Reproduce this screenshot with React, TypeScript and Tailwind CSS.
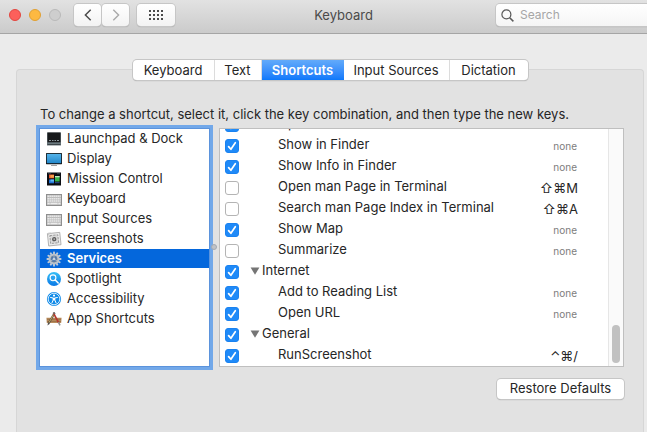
import React, { useState } from "react";

type IconProps = { children: React.ReactNode };

function Icon({ children }: IconProps) {
  return (
    <svg viewBox="0 0 16 16" className="size-4 shrink-0" aria-hidden="true">
      {children}
    </svg>
  );
}

const dockIcon = (
  <Icon>
    <rect x="1" y="1.5" width="14" height="13" fill="#6f7b80" />
    <rect x="1.5" y="1.5" width="13" height="9.5" fill="#17191b" />
    <rect x="1.5" y="11" width="13" height="3" fill="#3c4549" />
    <path d="M3 9.5h2M6 9.5h1.5M8.5 9.5h1.5M11 9.5h2" stroke="#8b979c" strokeWidth="1" />
    <path d="M1.5 12.2h13" stroke="#93a4aa" strokeWidth="0.8" />
  </Icon>
);

const displayIcon = (
  <Icon>
    <defs>
      <linearGradient id="screen" x1="0" y1="0" x2="0" y2="1">
        <stop offset="0" stopColor="#55b4ea" />
        <stop offset="1" stopColor="#2388cb" />
      </linearGradient>
    </defs>
    <rect x="0" y="2" width="16" height="11.2" rx="0.6" fill="#111" />
    <rect x="0.8" y="2.8" width="14.4" height="9.4" fill="url(#screen)" />
    <path d="M6 13.2h4v1H6z" fill="#b9bcbe" />
    <path d="M5 14h6v0.8H5z" fill="#8c8f91" />
  </Icon>
);

const missionIcon = (
  <Icon>
    <rect x="1" y="1.5" width="14" height="13" fill="#0b0d12" />
    <rect x="3" y="3.5" width="5" height="3.8" fill="#e8572a" />
    <rect x="4.4" y="4" width="3.6" height="2.6" fill="#f6a04a" />
    <rect x="9" y="5" width="4.6" height="5.5" fill="#35b54a" />
    <rect x="9" y="5" width="4.6" height="1.3" fill="#c6e8c4" />
    <rect x="3" y="8.5" width="5" height="3.8" fill="#2275d8" />
    <rect x="4.5" y="8.5" width="3.5" height="2" fill="#65b9f1" />
    <rect x="9" y="11" width="4.6" height="1.2" fill="#29427c" />
    <path d="M2 2.7h3M11 2.7h3" stroke="#506070" strokeWidth="0.6" />
  </Icon>
);

const keyboardIcon = (
  <Icon>
    <rect x="0.5" y="3.5" width="15" height="11" fill="#bdbdbd" stroke="#8f8f8f" strokeWidth="1" />
    <path d="M1.5 5.3h13M1.5 7.7h13M1.5 10.1h13" stroke="#ededed" strokeWidth="1.5" strokeDasharray="1.4 0.6" />
    <path d="M1.5 12.5h2.2M4.4 12.5h7.2M12.3 12.5h2.2" stroke="#ededed" strokeWidth="1.3" />
  </Icon>
);

const screenshotIcon = (
  <Icon>
    <g transform="rotate(-6 8 8)">
      <rect x="2" y="2" width="12.4" height="12.4" fill="#ececec" stroke="#a5a5a5" strokeWidth="0.8" />
      <rect x="4.2" y="4.2" width="8" height="8" fill="#dadada" stroke="#8d8d8d" strokeWidth="0.8" strokeDasharray="2.4 1" />
      <circle cx="8.2" cy="8.2" r="2.2" fill="#5c5c5c" />
      <circle cx="8.2" cy="8.2" r="0.9" fill="#b4b4b4" />
    </g>
    <path d="M2 1.8 5 1.4 2.2 4.4z" fill="#c8c8c8" />
  </Icon>
);

const servicesIcon = (
  <Icon>
    {[0, 30, 60, 90, 120, 150].map((angle) => (
      <rect key={angle} x="7.1" y="0.6" width="1.8" height="14.8" rx="0.5" fill="#c3ccd6" transform={`rotate(${angle} 8 8)`} />
    ))}
    <circle cx="8" cy="8" r="4.4" fill="#4b76ac" stroke="#b9c2cb" strokeWidth="2.4" />
    <circle cx="8" cy="8" r="3.1" fill="none" stroke="#7c8894" strokeWidth="0.6" />
    <path d="M8 8V4.6M8 8l3 1.8M8 8l-3 1.8" stroke="#aab7c4" strokeWidth="0.9" />
    <circle cx="8" cy="8" r="1.3" fill="#c9d3dc" />
  </Icon>
);

const spotlightIcon = (
  <Icon>
    <defs>
      <linearGradient id="lens" x1="0" y1="0" x2="0" y2="1">
        <stop offset="0" stopColor="#36c0f7" />
        <stop offset="1" stopColor="#0a78e6" />
      </linearGradient>
    </defs>
    <circle cx="8" cy="8" r="7" fill="url(#lens)" />
    <circle cx="7" cy="6.8" r="2.9" fill="#2ba4f0" stroke="#fff" strokeWidth="1.1" />
    <path d="m9.2 9 3 3" stroke="#fff" strokeWidth="1.5" strokeLinecap="round" />
  </Icon>
);

const accessibilityIcon = (
  <Icon>
    <circle cx="8" cy="8" r="7.1" fill="#128be8" />
    <circle cx="8" cy="8" r="5.8" fill="none" stroke="#fff" strokeWidth="0.8" />
    <circle cx="8" cy="4.6" r="1.1" fill="#fff" />
    <path d="M4.6 6.5 7.2 7v2l-1.3 3M11.4 6.5 8.8 7v2l1.3 3" fill="none" stroke="#fff" strokeWidth="1" strokeLinecap="round" />
    <path d="M7 6.7h2v2.6H7z" fill="#fff" />
  </Icon>
);

const appShortcutsIcon = (
  <Icon>
    <path d="M0.4 6.8h15.2l-.4 5.2H.8z" fill="#b98d5e" />
    <path d="M1 8.3h14M1 10.4h14" stroke="#8a5f38" strokeWidth="0.6" />
    <path d="M8.6 2 2.4 12.8" stroke="#4e4a46" strokeWidth="2" />
    <path d="M8.2 2.4 3 11.6" stroke="#d9b65a" strokeWidth="0.9" />
    <path d="m2.4 12.2-1.2 2.4 2.2-1.5z" fill="#33302e" />
    <path d="m7.4 2 5.4 10" stroke="#b5372c" strokeWidth="1.6" />
    <path d="m12.4 11 1 2.2M13.2 12.6l.8 1.8" stroke="#8e9296" strokeWidth="1.5" />
    <path d="M6.8 1.6 8.6 1l.8 1.6-1.8.9z" fill="#6f6a68" />
  </Icon>
);

const categories = [
  { name: "Launchpad & Dock", icon: dockIcon },
  { name: "Display", icon: displayIcon },
  { name: "Mission Control", icon: missionIcon },
  { name: "Keyboard", icon: keyboardIcon },
  { name: "Input Sources", icon: keyboardIcon },
  { name: "Screenshots", icon: screenshotIcon },
  { name: "Services", icon: servicesIcon },
  { name: "Spotlight", icon: spotlightIcon },
  { name: "Accessibility", icon: accessibilityIcon },
  { name: "App Shortcuts", icon: appShortcutsIcon },
];

type Service = { name: string; on: boolean; keys?: string; group?: boolean };

const services: Service[] = [
  { name: "Open", on: true },
  { name: "Show in Finder", on: true, keys: "none" },
  { name: "Show Info in Finder", on: true, keys: "none" },
  { name: "Open man Page in Terminal", on: false, keys: "⇧⌘M" },
  { name: "Search man Page Index in Terminal", on: false, keys: "⇧⌘A" },
  { name: "Show Map", on: true, keys: "none" },
  { name: "Summarize", on: false, keys: "none" },
  { name: "Internet", on: true, group: true },
  { name: "Add to Reading List", on: true, keys: "none" },
  { name: "Open URL", on: true, keys: "none" },
  { name: "General", on: true, group: true },
  { name: "RunScreenshot", on: true, keys: "⌃⌘/" },
];

const tabs = [
  { name: "Keyboard", width: "w-[82px]" },
  { name: "Text", width: "w-[47px]" },
  { name: "Shortcuts", width: "w-[82px]" },
  { name: "Input Sources", width: "w-[106px]" },
  { name: "Dictation", width: "w-[78px]" },
];

function TitleBar() {
  const button =
    "flex h-[22px] items-center justify-center bg-linear-to-b from-white to-[#f3f3f3] shadow-[0_0_0_1px_#c6c6c6,0_1px_1px_#9a9a9a]";
  return (
    <header className="-mr-10 grid h-[34px] grid-cols-[minmax(0,1fr)_170px_minmax(0,1fr)] border-b border-[#a5a5a5] bg-linear-to-b from-[#e2e2e2] to-[#cbcbcb] pt-1">
      <div className="flex h-[22px] items-center pl-[9px]">
        <div className="flex gap-2">
          <button aria-label="Close" className="size-3 rounded-full border border-[#e2463f] bg-[#fc605b]" />
          <button aria-label="Minimize" className="size-3 rounded-full border border-[#e0a033] bg-[#fdb942]" />
          <button aria-label="Zoom" className="size-3 rounded-full border border-[#b9b9b9] bg-[#cecece]" />
        </div>
        <div className="ml-[13px] flex gap-px">
          <button aria-label="Back" className={`${button} w-[27px] rounded-[4px]`}>
            <svg viewBox="0 0 8 12" className="h-3 w-2">
              <path d="M6.7.8 1.4 6l5.3 5.2" fill="none" stroke="#4b4b4b" strokeWidth="1.5" />
            </svg>
          </button>
          <button aria-label="Forward" className={`${button} w-[27px] rounded-[4px]`}>
            <svg viewBox="0 0 8 12" className="h-3 w-2">
              <path d="M1.3.8 6.6 6l-5.3 5.2" fill="none" stroke="#a9a9a9" strokeWidth="1.4" />
            </svg>
          </button>
        </div>
        <button aria-label="Show All" className={`${button} ml-2 w-[38px] rounded-[4px]`}>
          <svg viewBox="0 0 14 10" className="h-2.5 w-3.5" fill="#4b4b4b">
            {[0, 4, 8].map((y) =>
              [0, 4, 8, 12].map((x) => <rect key={`${x}-${y}`} x={x} y={y} width="2" height="2" />),
            )}
          </svg>
        </button>
      </div>
      <h1 className="text-center leading-[23px] text-[#4a4a4a]">Keyboard</h1>
      <div className="flex justify-end">
        <label className="flex h-[22px] w-[191px] items-center gap-1.5 rounded-[4px] bg-linear-to-b from-white to-[#f5f5f5] pl-[5px] shadow-[0_0_0_1px_#c6c6c6,0_1px_1px_#9a9a9a]">
          <svg viewBox="0 0 13 13" className="size-[13px] shrink-0" fill="none" stroke="#5a5a5a" strokeWidth="1.2">
            <circle cx="5.4" cy="5.4" r="4.5" />
            <path d="m8.7 8.7 3.7 3.7" strokeWidth="1.5" />
          </svg>
          <input
            type="search"
            aria-label="Search"
            placeholder="Search"
            className="w-full min-w-0 bg-transparent text-xs outline-none placeholder:text-[#a6a6a6]"
          />
        </label>
      </div>
    </header>
  );
}

function TabBar() {
  const [active, setActive] = useState("Shortcuts");
  return (
    <div
      role="tablist"
      className="-mt-[10px] mr-1 flex h-5 divide-x divide-[#dcdcdc] self-center overflow-hidden rounded-[4px] bg-white shadow-[0_0_0_1px_#c6c6c6,0_1px_1px_#999]"
    >
      {tabs.map((tab) => (
        <button
          key={tab.name}
          role="tab"
          aria-selected={tab.name === active}
          onClick={() => setActive(tab.name)}
          className={`${tab.width} whitespace-nowrap text-center leading-5 aria-selected:border-r-0 aria-selected:bg-linear-to-b aria-selected:from-[#62aafa] aria-selected:to-[#0a78fb] aria-selected:font-semibold aria-selected:text-white`}
        >
          {tab.name}
        </button>
      ))}
    </div>
  );
}

function CategoryList() {
  const [selected, setSelected] = useState("Services");
  return (
    <ul className="my-px w-[169px] shrink-0 bg-white shadow-[0_0_0_1px_#5b93dc,0_0_0_4px_#72a8e9]">
      {categories.map((category) => (
        <li key={category.name}>
          <button
            aria-pressed={category.name === selected}
            onClick={() => setSelected(category.name)}
            className="flex h-5 w-full items-center gap-[5px] border-b border-white pl-[6px] aria-pressed:bg-[#0467dc] aria-pressed:font-semibold aria-pressed:text-white"
          >
            {category.icon}
            <span className="pb-0.5 leading-4">{category.name}</span>
          </button>
        </li>
      ))}
    </ul>
  );
}

function ServiceRow({ service }: { service: Service }) {
  const [on, setOn] = useState(service.on);
  const id = service.name.toLowerCase().replaceAll(" ", "-");
  return (
    <tr className="h-[21px]">
      <td className="w-[30px] p-0 pl-[5px]">
        <span className="grid size-3.5">
          <input
            id={id}
            type="checkbox"
            checked={on}
            onChange={() => setOn(!on)}
            className="peer col-start-1 row-start-1 size-3.5 appearance-none rounded-[3px] border border-[#b4b4b4] bg-white checked:border-[#1a82f0] checked:bg-[#1f8af8]"
          />
          <svg
            viewBox="0 0 14 14"
            className="pointer-events-none invisible col-start-1 row-start-1 size-3.5 peer-checked:visible"
          >
            <path d="m3.6 7.6 2.3 2.7 4.4-6.6" fill="none" stroke="#fff" strokeWidth="1.7" strokeLinecap="round" strokeLinejoin="round" />
          </svg>
        </span>
      </td>
      <td className={service.group ? "p-0" : "p-0 pl-7"}>
        <label htmlFor={id} className="flex h-[21px] items-center whitespace-nowrap pb-px">
          {service.group && (
            <svg viewBox="0 0 10 8" className="mr-0.5 h-2 w-2.5" fill="#757575">
              <path d="M.6.4h8.8L5 7.8z" />
            </svg>
          )}
          {service.name}
        </label>
      </td>
      <td
        className={
          service.keys === "none"
            ? "p-0 pr-[31px] text-right text-[10px] leading-4 text-[#7d7d7d]"
            : "p-0 pr-[30px] text-right leading-4"
        }
      >
        {service.keys}
      </td>
    </tr>
  );
}

export default function App() {
  return (
    <div className="flex min-h-screen flex-col overflow-hidden bg-[#ebebeb] font-['Inter','Liberation_Sans',sans-serif] text-[13px] text-[#262626]">
      <TitleBar />
      <main className="mt-[35px] mr-[3px] ml-4 flex grow flex-col rounded-t-[4px] border border-b-0 border-[#d6d6d6] bg-[#e2e2e2] pr-[19px] pl-[23px]">
        <TabBar />
        <p className="mt-6 whitespace-nowrap leading-5">
          To change a shortcut, select it, click the key combination, and then type the new keys.
        </p>
        <div className="mt-1 flex h-[239px] items-stretch">
          <CategoryList />
          <div className="relative w-2.5 shrink-0">
            <span className="absolute top-[116px] left-0.5 size-1.5 rounded-full border border-[#a3a9b3] bg-[#bfc2c7]" />
          </div>
          <div className="flex min-w-0 grow border border-[#bfbfbf] bg-white">
            <div className="flex min-w-0 grow flex-col justify-end overflow-hidden">
              <table className="w-full border-collapse">
                <tbody>
                  {services.map((service) => (
                    <ServiceRow key={service.name} service={service} />
                  ))}
                </tbody>
              </table>
            </div>
            <div className="flex w-[15px] shrink-0 flex-col items-center justify-end border-l border-[#e6e6e6] bg-[#fafafa] pb-[3px]">
              <div className="h-[38px] w-2 rounded-full bg-[#c1c1c1]" />
            </div>
          </div>
        </div>
        <button className="mt-3 h-5 w-[127px] self-end rounded-[4px] bg-white pb-0.5 leading-[18px] shadow-[0_0_0_1px_#c6c6c6,0_1px_1px_#999]">
          Restore Defaults
        </button>
      </main>
    </div>
  );
}
